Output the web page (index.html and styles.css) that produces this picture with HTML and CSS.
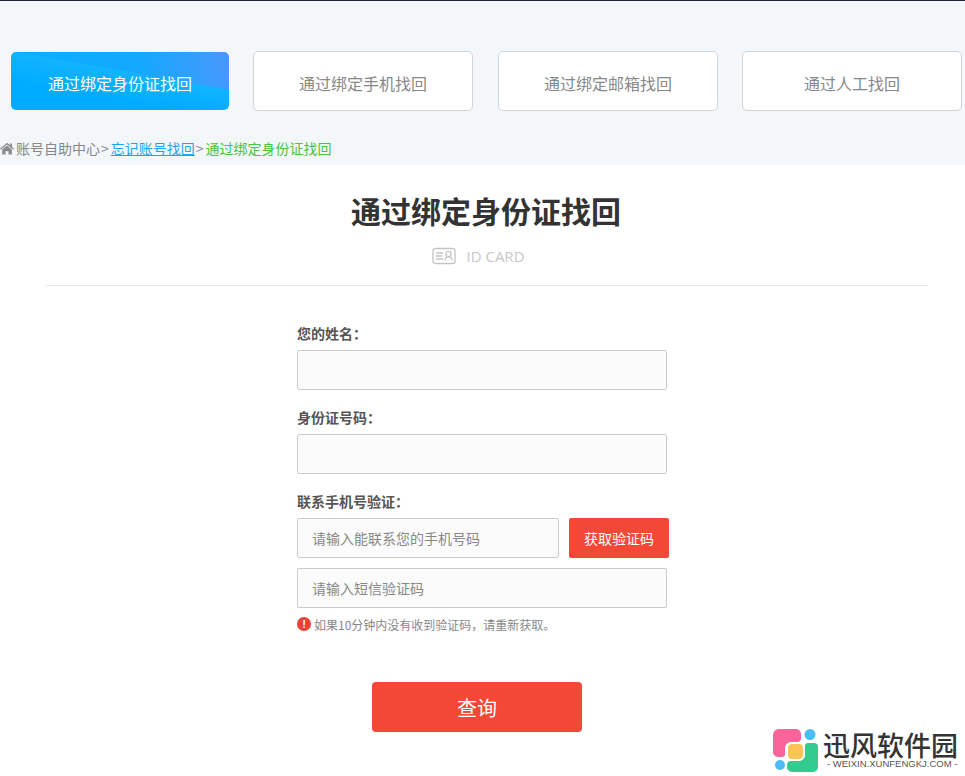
FILE: index.html
```html
<!DOCTYPE html>
<html lang="zh-CN">
<head>
<meta charset="utf-8">
<title>通过绑定身份证找回</title>
<link rel="stylesheet" href="styles.css">
</head>
<body>
<header class="top">
  <nav class="tabs">
    <a class="tab tab-active">通过绑定身份证找回</a>
    <a class="tab tab-second">通过绑定手机找回</a>
    <a class="tab tab-third">通过绑定邮箱找回</a>
    <a class="tab tab-fourth">通过人工找回</a>
  </nav>
  <div class="crumbs">
    <svg class="home" viewBox="0 0 14 13" width="14" height="13"><path d="M7 .8 0 6.800l.8.9L7 2.500l6.200 5.200.8-.9-2-1.700V1.500H10.200v1.800Z" fill="#8a8a8a"/><path d="M2.200 7.500 7 3.500l4.800 4V12.600H8.500V9.200h-3v3.400H2.200Z" fill="#8a8a8a"/></svg>
    <span>账号自助中心</span><span class="sep">&gt;</span><a class="crumb-link">忘记账号找回</a><span class="sep">&gt;</span><span class="crumb-now">通过绑定身份证找回</span>
  </div>
</header>
<main class="main">
  <h1 class="title">通过绑定身份证找回</h1>
  <div class="sub">
    <svg viewBox="0 0 24 18" width="24" height="18" fill="none" stroke="#c4c4c4" stroke-width="1.300"><rect x="1" y="1.500" width="22" height="15" rx="2"/><path d="M4 6h7M4 9h6M4 12h7"/><circle cx="16.500" cy="7" r="2.600"/><path d="M12.800 13.500c.4-2.600 1.800-3.800 3.700-3.800s3.300 1.200 3.700 3.800"/></svg>
    <span>ID CARD</span>
  </div>
  <form class="form">
    <label class="label">您的姓名：</label>
    <input class="field" type="text">
    <label class="label">身份证号码：</label>
    <input class="field" type="text">
    <label class="label">联系手机号验证：</label>
    <div class="row">
      <input class="field field-phone" type="text" placeholder="请输入能联系您的手机号码">
      <button class="code" type="button">获取验证码</button>
    </div>
    <input class="field field-sms" type="text" placeholder="请输入短信验证码">
    <p class="hint"><span class="bang">!</span>如果10分钟内没有收到验证码，请重新获取。</p>
    <button class="submit" type="button">查询</button>
  </form>
</main>
<div class="brand">
  <svg viewBox="0 0 46 46" width="46" height="46">
    <path d="M6 1h17a5 5 0 0 1 5 5v4a4 4 0 0 1-4 4h-6a6 6 0 0 0-6 6v6a3 3 0 0 1-3 3H5a5 5 0 0 1-5-5V7a6 6 0 0 1 6-6Z" fill="#f9649b"/>
    <circle cx="37" cy="6.500" r="5.500" fill="#4dbcf6"/>
    <circle cx="7" cy="37" r="5" fill="#4dbcf6"/>
    <rect x="15" y="16" width="15" height="15" rx="4" fill="#fdc453"/>
    <path d="M35 15h6a4 4 0 0 1 4 4v20a5 5 0 0 1-5 5H19a5 5 0 0 1-5-5v-2a4 4 0 0 1 4-4h8a6 6 0 0 0 6-6V18a3 3 0 0 1 3-3Z" fill="#34cc8e"/>
  </svg>
  <div class="brand-text">
    <div class="brand-name">迅风软件园</div>
    <div class="brand-url">- WEIXIN.XUNFENGKJ.COM -</div>
  </div>
</div>
</body>
</html>
```
FILE: styles.css
```css
* { box-sizing: border-box; }
html, body { margin: 0; padding: 0; }
body {
  width: 965px;
  height: 776px;
  overflow: hidden;
  background: #fff;
  font-family: "Noto Sans CJK SC", "Liberation Sans", sans-serif;
  color: #888;
}
.top {
  height: 165px;
  background: #f3f7fa;
  border-top: 1px solid #1d2436;
  padding-top: 50px;
}
.tabs { display: flex; align-items: center; height: 60px; padding-left: 11px; }
.tab {
  display: flex;
  align-items: center;
  justify-content: center;
  width: 220px;
  height: 60px;
  padding-top: 4px;
  background: #fff;
  border: 1px solid #d2d5d8;
  border-radius: 5px;
  font-size: 16px;
  color: #888;
}
.tab-active {
  width: 218px;
  height: 58px;
  border: 0;
  color: #fff;
  background:
    linear-gradient(190deg, transparent 39%, #12b4ff 39%, #00acff 70%),
    linear-gradient(75deg, #08b0ff 0%, #14a8ff 60%, #4a98fb 100%);
}
.tab-second { margin-left: 24px; }
.tab-third { margin-left: 25px; }
.tab-fourth { margin-left: 24px; }
.crumbs {
  display: flex;
  align-items: center;
  height: 20px;
  margin-top: 27px;
  font-size: 14px;
  color: #888;
  white-space: nowrap;
}
.home { margin-right: 2px; }
.sep { margin: 0 1px; }
.sep + .crumb-link { margin-left: 1px; }
.crumb-link { color: #1ea5e8; text-decoration: underline; }
.crumb-now { margin-left: 1px; color: #4fc03f; }
.main { display: flex; flex-direction: column; align-items: center; }
.title {
  margin: 23px 0 0 7px;
  font-size: 30px;
  line-height: 44px;
  font-weight: 700;
  color: #333;
}
.sub {
  display: flex;
  align-items: center;
  gap: 10px;
  height: 20px;
  margin-top: 14px;
  margin-left: -8px;
  color: #c8c8c8;
  font-family: "Open Sans", "Liberation Sans", sans-serif;
  font-size: 15px;
}
.form {
  width: 372px;
  margin: 19px 0 0 1px;
  padding-top: 38px;
  position: relative;
  display: flex;
  flex-direction: column;
  align-items: flex-start;
}
.form::before {
  content: "";
  position: absolute;
  top: 0;
  left: -251px;
  width: 882px;
  height: 1px;
  background: #e8e8e8;
}
.label {
  display: block;
  height: 20px;
  margin-bottom: 7px;
  font-size: 14px;
  line-height: 20px;
  font-weight: 700;
  color: #555;
}
.field {
  display: block;
  width: 370px;
  height: 40px;
  margin: 0 0 17px;
  padding: 0 14px;
  background: #fbfbfb;
  border: 1px solid #ccc;
  border-radius: 2px;
  font: 14px "Noto Sans CJK SC", sans-serif;
  outline: none;
}
.field::placeholder { color: #888; opacity: 1; }
.row { display: flex; gap: 10px; margin-bottom: 10px; }
.field-phone { width: 262px; margin: 0; }
.field-sms { margin-bottom: 0; }
.code {
  width: 100px;
  height: 40px;
  padding: 0;
  border: 0;
  border-radius: 2px;
  background: #f44837;
  color: #fff;
  font: 14px "Noto Sans CJK SC", sans-serif;
}
.hint {
  display: flex;
  align-items: center;
  height: 18px;
  margin: 7px 0 0;
  font-size: 12px;
  color: #888;
}
.bang {
  display: flex;
  align-items: center;
  justify-content: center;
  width: 14px;
  height: 14px;
  margin-right: 3px;
  border-radius: 50%;
  background: #ee4035;
  color: #fff;
  font: 700 11px "Liberation Sans", sans-serif;
}
.submit {
  align-self: flex-start;
  width: 210px;
  height: 50px;
  margin: 49px 0 0 75px;
  padding: 0;
  border: 0;
  border-radius: 4px;
  background: #f44837;
  color: #fff;
  font: 20px "Noto Sans CJK SC", sans-serif;
}
.brand {
  position: absolute;
  left: 773px;
  top: 728px;
  display: flex;
  gap: 4px;
}
.brand-text { padding-top: 2px; }
.brand-name {
  height: 29px;
  font-size: 27px;
  line-height: 29px;
  font-weight: 500;
  color: #333;
  white-space: nowrap;
}
.brand-url {
  padding-left: 4px;
  font: 9.500px/10px "Liberation Sans", sans-serif;
  color: #555;
  white-space: nowrap;
}
```
